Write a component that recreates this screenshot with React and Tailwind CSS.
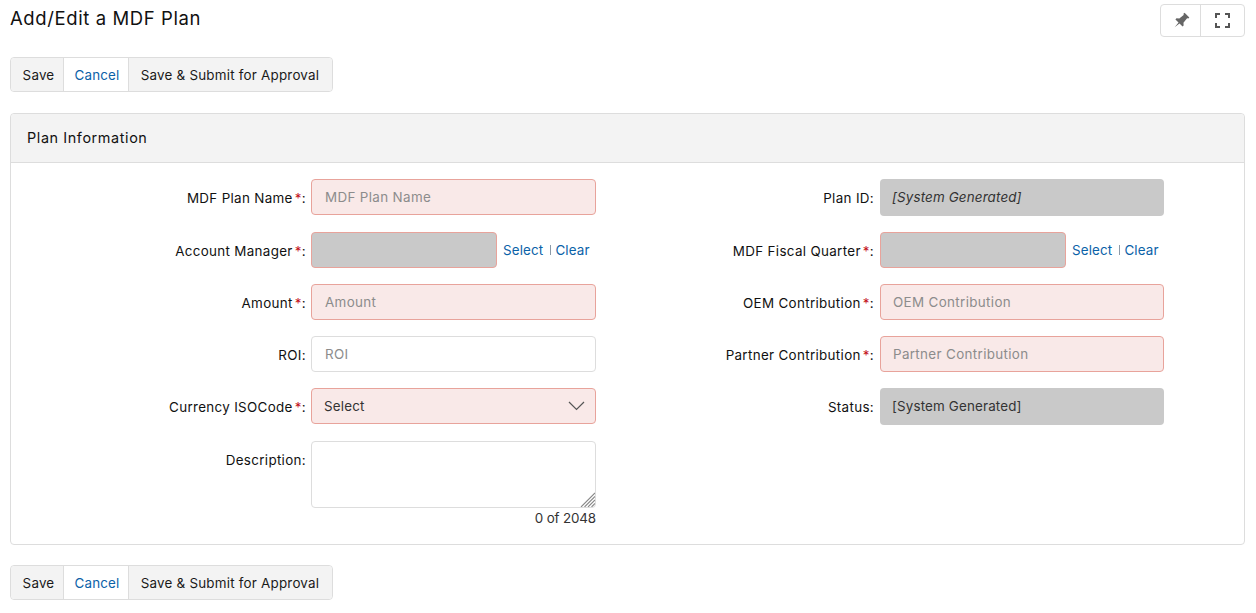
import React from 'react';

const ButtonBar = () => (
  <div className="flex w-fit h-[35px] rounded border border-[#dddddd] text-[13.4px] tracking-[0.2px] text-[#1a1a1a]">
    <button className="w-[52px] pt-[2px] pl-[3px] bg-[#f3f3f3] rounded-l">Save</button>
    <button className="w-[66px] pt-[2px] pl-[2px] bg-white border-x border-[#dddddd] text-[#0b62a8]">Cancel</button>
    <button className="w-[203px] pt-[2px] pr-[1px] bg-[#f3f3f3] rounded-r tracking-[0.22px]">Save &amp; Submit for Approval</button>
  </div>
);

const Label = ({ text, required, top, right }) => (
  <label
    className={`shrink-0 text-right text-[13.4px] tracking-[0.33px] text-[#111111] ${
      right ? 'w-[284px] pr-[6px]' : 'w-[300px] pr-[5px]'
    } ${top ? 'self-start pt-[9px]' : 'pt-[2px]'}`}
  >
    {text}
    {required && <span className="text-[#c4151c] ml-[2px]">*</span>}:
  </label>
);

const TextInput = ({ placeholder, required, right }) => (
  <input
    placeholder={placeholder}
    className={`shrink-0 h-full rounded border text-[13.4px] tracking-[0.35px] outline-none placeholder:text-[#8c8c8c] ${
      right ? 'w-[284px] px-[12px]' : 'w-[285px] px-[13px]'
    } ${required ? 'bg-[#f9e9e8] border-[#e8a39b]' : 'bg-white border-[#dddddd]'}`}
  />
);

const Lookup = () => (
  <div className="flex items-center h-full text-[13.4px] tracking-[0.15px] text-[#0b62a8]">
    <div className="w-[186px] h-full rounded border border-[#e8a39b] bg-[#c9c9c9]" />
    <a className="ml-[6px]">Select</a>
    <span className="ml-[7px] mr-[4px] h-[10px] border-l border-[#8c9aa8]" />
    <a>Clear</a>
  </div>
);

const ReadOnly = ({ children, italic }) => (
  <div className={`self-start w-[284px] h-[37px] pb-[1px] flex items-center px-[12px] rounded bg-[#c9c9c9] text-[13.4px] tracking-[0.15px] text-[#333333] ${italic ? 'italic' : ''}`}>
    {children}
  </div>
);

const Row = ({ children }) => <div className="flex items-center h-[36px] mb-[16.25px]">{children}</div>;

export default function App() {
  return (
    <div className="min-h-screen bg-white pl-[10px] pr-[11px] pt-[7px] font-['Inter','Liberation_Sans',sans-serif]">
      <div className="flex items-start justify-between h-[50px]">
        <h1 className="text-[18.5px] leading-[22px] text-[#111111] tracking-[0.6px]">Add/Edit a MDF Plan</h1>
        <div className="flex h-[33px] -mt-[3px] rounded border border-[#dddddd]">
          <button className="w-[40px] flex items-center justify-center border-r border-[#dddddd]">
            <svg width="18" height="18" viewBox="0 0 16 16" fill="#666666">
              <path transform="rotate(45 8 8)" d="M5 0.5h6v1.7h-0.9l0.5 5.3 1.9 1.7v1.3H8.6L8 16l-0.6-5.5H3.5V9.2l1.9-1.7 0.5-5.3H5z" />
            </svg>
          </button>
          <button className="w-[43px] flex items-center justify-center">
            <svg width="15" height="15" viewBox="0 0 15 15" fill="none" stroke="#555555" strokeWidth="2">
              <path d="M1 5V1h4M10 1h4v4M14 10v4h-4M5 14H1v-4" />
            </svg>
          </button>
        </div>
      </div>

      <ButtonBar />

      <div className="mt-[21px] h-[432px] rounded border border-[#dddddd]">
        <div className="h-[49px] flex items-center pl-[16px] bg-[#f3f3f3] border-b border-[#dddddd] rounded-t text-[14.4px] tracking-[0.6px] text-[#111111]">
          Plan Information
        </div>
        <div className="flex pt-[16.4px]">
          <div className="w-[585px]">
            <Row><Label text="MDF Plan Name" required /><TextInput placeholder="MDF Plan Name" required /></Row>
            <Row><Label text="Account Manager" required /><Lookup /></Row>
            <Row><Label text="Amount" required /><TextInput placeholder="Amount" required /></Row>
            <Row><Label text="ROI" /><TextInput placeholder="ROI" /></Row>
            <Row>
              <Label text="Currency ISOCode" required />
              <div className="relative w-[285px] shrink-0 h-full flex items-center px-[12px] rounded border border-[#e8a39b] bg-[#f9e9e8] text-[13.4px] tracking-[0.2px] text-[#333333]">
                Select
                <svg className="absolute right-[10px] top-[12px]" width="17" height="10" viewBox="0 0 17 10" fill="none" stroke="#555555" strokeWidth="1.2">
                  <path d="M1 1l7.5 7.5L16 1" />
                </svg>
              </div>
            </Row>
            <div className="flex">
              <Label text="Description" top />
              <div className="w-[285px] shrink-0">
                <div className="relative">
                  <textarea className="block w-full h-[67px] rounded border border-[#dddddd] outline-none resize-none" />
                  <svg className="absolute right-[1px] bottom-[1px]" width="15" height="15" viewBox="0 0 15 15" fill="none" stroke="#888888" strokeWidth="1.1">
                    <path d="M1 15L15 1M4.5 15L15 4.5M8 15l7-7M11.5 15l3.5-3.5" />
                  </svg>
                </div>
                <div className="text-right text-[13.4px] tracking-[-0.15px] text-[#333333]">0 of 2048</div>
              </div>
            </div>
          </div>
          <div className="flex-1">
            <Row><Label right text="Plan ID" /><ReadOnly italic>[System Generated]</ReadOnly></Row>
            <Row><Label right text="MDF Fiscal Quarter" required /><Lookup /></Row>
            <Row><Label right text="OEM Contribution" required /><TextInput right placeholder="OEM Contribution" required /></Row>
            <Row><Label right text="Partner Contribution" required /><TextInput right placeholder="Partner Contribution" required /></Row>
            <Row><Label right text="Status" /><ReadOnly>[System Generated]</ReadOnly></Row>
          </div>
        </div>
      </div>

      <div className="mt-[20px]">
        <ButtonBar />
      </div>
    </div>
  );
}
